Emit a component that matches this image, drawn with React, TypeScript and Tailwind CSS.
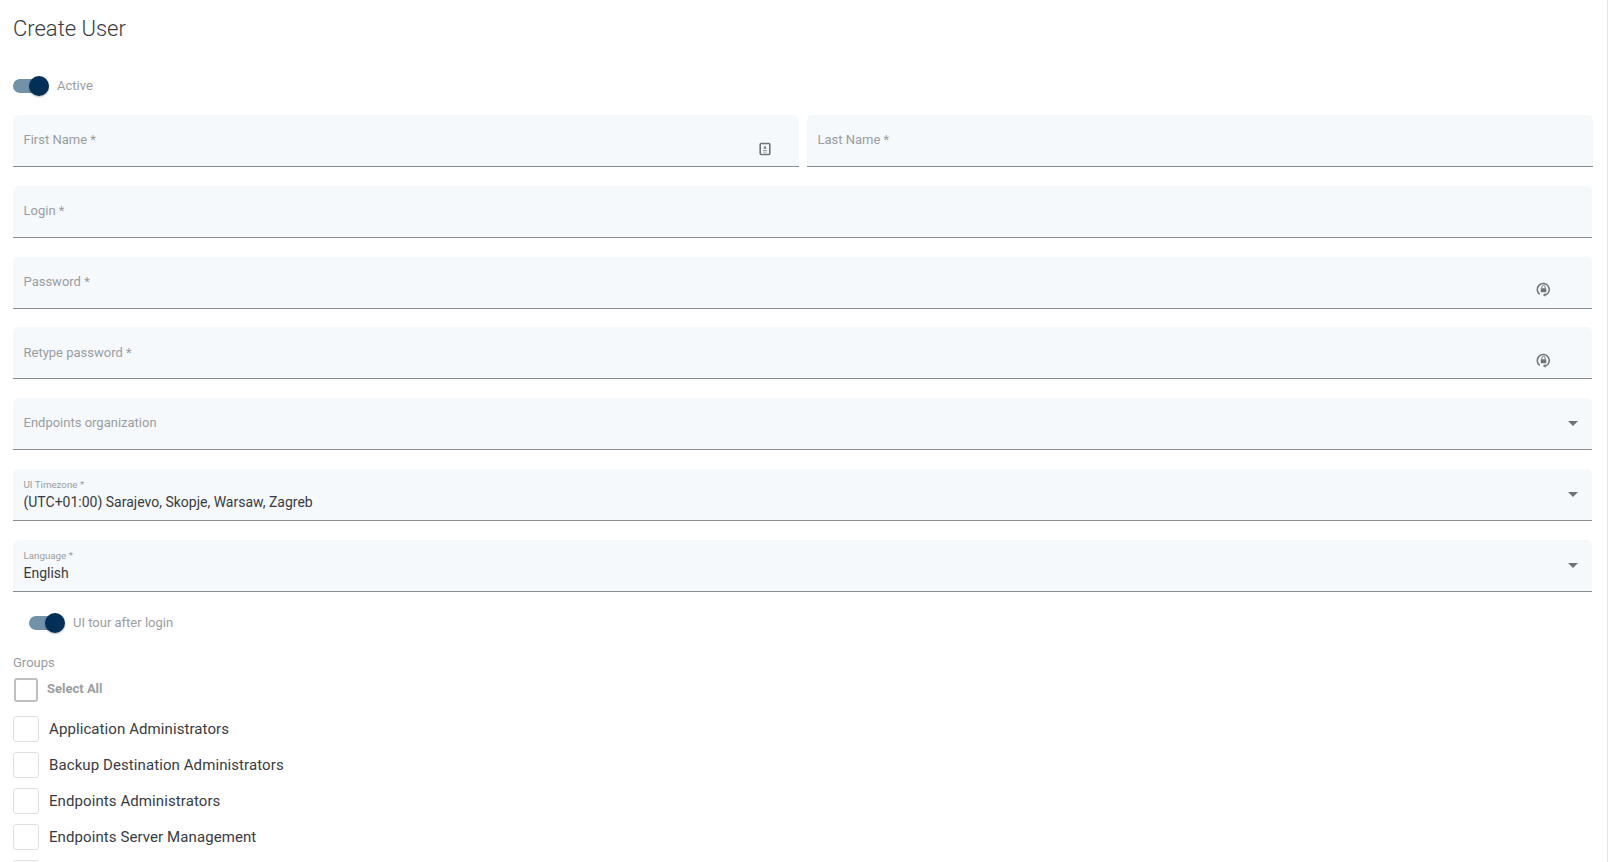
const inputFont = "font-['Roboto',sans-serif]";

function Toggle() {
  return (
    <div className="relative h-[14px] w-[34px] rounded-full bg-[#7391a8]">
      <div className="absolute right-[-2px] top-[-3px] h-[20px] w-[20px] rounded-full bg-[#003058] shadow-[0_1px_2px_rgba(0,0,0,0.3)]" />
    </div>
  );
}

function ContactIcon() {
  return (
    <svg width="14" height="14" viewBox="0 0 14 14" className="text-[#6f7376]">
      <rect x="2.2" y="1.5" width="9.6" height="11" rx="1" fill="none" stroke="currentColor" strokeWidth="1.6" />
      <path d="M7 3.4 8.6 6.8H5.4Z" fill="currentColor" />
      <path d="M5 8h4v1H5zM5 9.8h4v.8H5z" fill="currentColor" opacity="0.7" />
    </svg>
  );
}

function LockIcon() {
  return (
    <svg width="15" height="15" viewBox="0 0 16 16" className="text-[#6f7376]">
      <path d="M4 13.2A6.4 6.4 0 1 1 10 14" fill="none" stroke="currentColor" strokeWidth="1.6" />
      <path d="M10.2 11.8v4L7.2 13.8Z" fill="currentColor" />
      <rect x="5" y="6.6" width="6" height="4.2" rx="0.6" fill="currentColor" />
      <path d="M6.2 6.8V5.4a1.8 1.8 0 0 1 3.6 0v1.4" fill="none" stroke="currentColor" strokeWidth="1" />
    </svg>
  );
}

function Arrow() {
  return <div className="h-0 w-0 border-x-[5px] border-t-[5px] border-x-transparent border-t-[#6f7376]" />;
}

function Field({ label, icon }: { label: string; icon?: React.ReactNode }) {
  return (
    <div className="flex h-[52px] w-full min-w-0 rounded-t-[5px] border-b border-[#8a8d90] bg-[#f5f9fc] pl-[10.5px]">
      <div className="flex-1 pt-[16.3px] text-[13px] leading-[17px] text-[#9a9da0]">{label}</div>
      {icon}
    </div>
  );
}

function SelectField({ label, value }: { label: string; value?: string }) {
  return (
    <div className="flex h-[52px] items-center rounded-t-[5px] border-b border-[#8a8d90] bg-[#f5f9fc] pl-[10.5px] pr-[14px]">
      {value ? (
        <div className="flex-1 pt-[2px]">
          <div className="text-[9.75px] leading-[12px] text-[#9a9da0]">{label}</div>
          <div className="mt-[2px] text-sm leading-[19px] text-[#383b3f]">{value}</div>
        </div>
      ) : (
        <div className="mb-[2px] flex-1 text-[13px] leading-[17px] text-[#9a9da0]">{label}</div>
      )}
      <Arrow />
    </div>
  );
}

const groups = [
  "Application Administrators",
  "Backup Destination Administrators",
  "Endpoints Administrators",
  "Endpoints Server Management",
  "",
];

export default function App() {
  return (
    <div className={`h-[862px] overflow-hidden border-r border-[#e6e6e6] bg-white pl-[13px] pr-[15px] ${inputFont}`}>
      <h1 className="pt-[14px] text-[22px] font-light leading-[30px] text-[#383b3f]">Create User</h1>

      <div className="mt-[32px] flex h-5 items-center gap-2">
        <Toggle />
        <span className="ml-[2px] text-[13px] text-[#9a9da0]">Active</span>
      </div>

      <div className="mt-[19px] flex flex-col gap-[18.8px]">
        <div className="mr-[-1px] flex gap-2">
          <Field
            label="First Name *"
            icon={
              <div className="mr-[27px] pt-[27px]">
                <ContactIcon />
              </div>
            }
          />
          <Field label="Last Name *" />
        </div>
        <Field label="Login *" />
        <Field
          label="Password *"
          icon={
            <div className="mr-[41px] pt-[25px]">
              <LockIcon />
            </div>
          }
        />
        <Field
          label="Retype password *"
          icon={
            <div className="mr-[41px] pt-[26px]">
              <LockIcon />
            </div>
          }
        />
        <SelectField label="Endpoints organization" />
        <SelectField label="UI Timezone *" value="(UTC+01:00) Sarajevo, Skopje, Warsaw, Zagreb" />
        <SelectField label="Language *" value="English" />
      </div>

      <div className="ml-[16px] mt-[21px] flex h-5 items-center gap-[10px]">
        <Toggle />
        <span className="text-[13px] text-[#9a9da0]">UI tour after login</span>
      </div>

      <div className="mt-[21px] text-[13px] leading-[17px] text-[#9a9da0]">Groups</div>
      <div className="mt-[7px] flex items-center">
        <div className="ml-[1px] h-[24px] w-[24px] rounded-[3px] border-2 border-[#bdbfc1]" />
        <span className="mb-[2px] ml-[9px] text-[13px] font-bold text-[#9a9da0]">Select All</span>
      </div>
      <div className="mt-[14px] flex flex-col gap-[10px]">
        {groups.map((g, i) => (
          <div key={i} className="flex h-[26px] items-center gap-[10px]">
            <div className="h-[26px] w-[26px] rounded-[3px] border border-[#dfe1e3]" />
            <span className="text-[15px] tracking-[0.09px] text-[#383b3f]">{g}</span>
          </div>
        ))}
      </div>
    </div>
  );
}
